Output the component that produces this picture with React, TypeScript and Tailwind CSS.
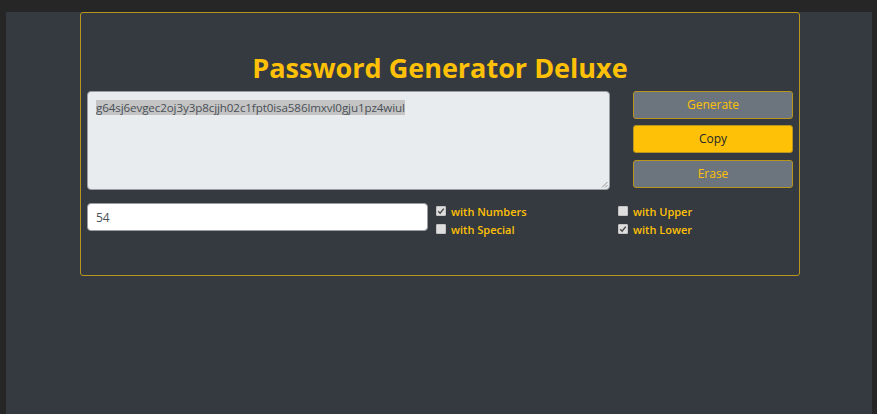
import React, { useState } from 'react';

const Check: React.FC<{ checked: boolean; label: string; onToggle: () => void }> = ({ checked, label, onToggle }) => (
  <label className="flex items-center gap-[5px] h-[18px] cursor-pointer select-none" onClick={onToggle}>
    <span className="w-[10px] h-[10px] bg-[#dedede] border border-[#c4c4c4] rounded-[1px] flex items-center justify-center">
      {checked && (
        <svg width="8" height="8" viewBox="0 0 8 8">
          <path d="M1.2 4.3 L3.1 6.2 L6.8 1.6" fill="none" stroke="#4a4a4a" strokeWidth="1.5" />
        </svg>
      )}
    </span>
    <span className="text-[11px] font-semibold text-[#ffc107] leading-none">{label}</span>
  </label>
);

export default function App() {
  const [password] = useState('g64sj6evgec2oj3y3p8cjjh02c1fpt0isa586lmxvl0gju1pz4wiul');
  const [length, setLength] = useState('54');
  const [opts, setOpts] = useState({ numbers: true, special: false, upper: false, lower: true });
  const toggle = (k: keyof typeof opts) => setOpts({ ...opts, [k]: !opts[k] });

  const btn = "h-[28px] w-full rounded-[3px] border border-[#b8951f] text-[12px] leading-none";

  return (
    <div className="min-h-[414px] bg-[#262626] pt-[12px] pl-[6px] pr-[5px]" style={{ fontFamily: '"Open Sans", "Noto Sans", sans-serif' }}>
      <div className="min-h-[402px] bg-[#343a40]">
        <div className="ml-[74px] w-[720px] h-[264px] border border-[#b8951f] rounded-[3px] px-[6px]">
          <h1 className="text-center text-[27px] font-bold text-[#ffc107] leading-[36px] mt-[37px] mb-[5px]">
            Password Generator Deluxe
          </h1>
          <div className="flex gap-[23px]">
            <div className="relative w-[523px] h-[99px] bg-[#e9ecef] border border-[#9a9ea3] rounded-[4px] px-[8px] pt-[2px]">
              <span className="text-[11.6px] text-[#495057] bg-[#c4c4c4] leading-[17px] tracking-[-0.1px]">{password}</span>
              <svg className="absolute right-[1px] bottom-[1px]" width="7" height="7" viewBox="0 0 7 7">
                <path d="M6.5 1 L1 6.5 M6.5 4 L4 6.5" stroke="#8a8a8a" strokeWidth="0.9" />
              </svg>
            </div>
            <div className="w-[160px] flex flex-col gap-[6px]">
              <button className={`${btn} bg-[#6c757d] text-[#ffc107]`}>Generate</button>
              <button className={`${btn} bg-[#ffc107] text-[#212529]`}>Copy</button>
              <button className={`${btn} bg-[#6c757d] text-[#ffc107] mt-[1px]`}>Erase</button>
            </div>
          </div>
          <div className="flex mt-[13px]">
            <input
              value={length}
              onChange={(e) => setLength(e.target.value)}
              className="w-[341px] h-[28px] bg-white border border-[#9a9ea3] rounded-[4px] px-[8px] text-[12px] text-[#495057] outline-none"
            />
            <div className="ml-[8px] mt-[-1px] w-[182px] flex flex-col">
              <Check checked={opts.numbers} label="with Numbers" onToggle={() => toggle('numbers')} />
              <Check checked={opts.special} label="with Special" onToggle={() => toggle('special')} />
            </div>
            <div className="mt-[-1px] flex flex-col">
              <Check checked={opts.upper} label="with Upper" onToggle={() => toggle('upper')} />
              <Check checked={opts.lower} label="with Lower" onToggle={() => toggle('lower')} />
            </div>
          </div>
        </div>
      </div>
    </div>
  );
}
